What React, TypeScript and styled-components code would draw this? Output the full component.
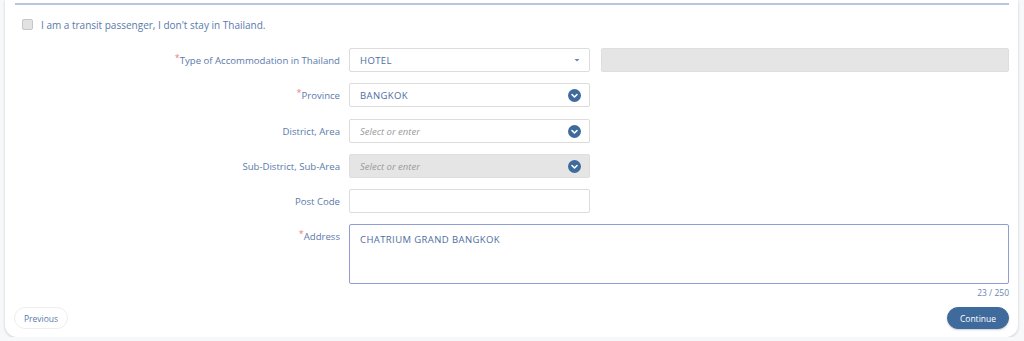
import { FC } from "react";
import styled, { createGlobalStyle } from "styled-components";

const GlobalStyle = createGlobalStyle`
  body {
    margin: 0;
    background: #f7f8fa;
    font-family: "Open Sans", "Liberation Sans", sans-serif;
  }
`;

const Card = styled.div`
  margin: 0 6px 0 5px;
  height: 337px;
  box-sizing: border-box;
  background: #fff;
  border-radius: 0 0 12px 12px;
  box-shadow: 0 1px 3px rgba(0, 0, 0, 0.18);
  padding: 0 9px 0 10px;
  display: flex;
  flex-direction: column;
`;

const Section = styled.div`
  margin-top: 3px;
  border-top: 2px solid #b8c6de;
  display: flex;
  flex-direction: column;
`;

const CheckRow = styled.label`
  display: flex;
  align-items: center;
  gap: 8px;
  padding: 14px 0 0 7px;
  height: 11px;
  font-size: 10px;
  color: #5a7aab;
`;

const Box = styled.span`
  width: 9px;
  height: 9px;
  border: 1px solid #c6c6c6;
  border-radius: 2px;
  background: #e2e2e2;
`;

const Form = styled.div`
  display: grid;
  grid-template-columns: 325px 241px 1fr;
  column-gap: 9px;
  row-gap: 11px;
  margin-top: 18px;
`;

const Label = styled.div<{ $shift?: boolean }>`
  font-size: 9.6px;
  color: #5a7aab;
  text-align: right;
  padding-top: ${({ $shift }) => ($shift ? "7px" : "6px")};
  white-space: nowrap;
`;

const Star = styled.span`
  color: #ef7d7d;
  position: relative;
  top: -3px;
  font-size: 9px;
`;

const Field = styled.div<{ $disabled?: boolean; $side?: boolean; $shift?: boolean }>`
  margin-left: ${({ $side }) => ($side ? "2px" : "0")};
  margin-top: ${({ $shift }) => ($shift ? "1px" : "0")};
  height: 24px;
  box-sizing: border-box;
  border: 1px solid ${({ $disabled }) => ($disabled ? "#dedede" : "#dcdcdc")};
  border-radius: 2px;
  background: ${({ $disabled }) => ($disabled ? "#e5e5e5" : "#fff")};
  display: flex;
  align-items: center;
  padding: 0 8px 0 10px;
  font-size: 9.5px;
  color: #4d6da0;
`;

const Value = styled.span<{ $placeholder?: boolean }>`
  flex: 1;
  font-style: ${({ $placeholder }) => ($placeholder ? "italic" : "normal")};
  color: ${({ $placeholder }) => ($placeholder ? "#9a9a9a" : "#4d6da0")};
  letter-spacing: ${({ $placeholder }) => ($placeholder ? "0" : "0.4px")};
`;

const Spacer = styled.div``;

const TextArea = styled.div`
  grid-column: 2 / 4;
  height: 60px;
  box-sizing: border-box;
  border: 1px solid #8e9dd4;
  border-radius: 2px;
  padding: 8px 10px;
  font-size: 9.5px;
  color: #4d6da0;
  letter-spacing: 0.4px;
`;

const Counter = styled.div`
  text-align: right;
  font-size: 8.5px;
  color: #6a86b0;
  margin-top: 3px;
`;

const Footer = styled.div`
  display: flex;
  justify-content: space-between;
  margin: 9px 0 0 -1px;
`;

const Button = styled.button<{ $primary?: boolean }>`
  height: 22px;
  border-radius: 11px;
  font-family: inherit;
  font-size: 8.5px;
  padding: 0 ${({ $primary }) => ($primary ? "12px" : "9px")};
  border: 1px solid ${({ $primary }) => ($primary ? "#3f6a9c" : "#eeeeee")};
  background: ${({ $primary }) => ($primary ? "#3f6a9c" : "#fff")};
  color: ${({ $primary }) => ($primary ? "#fff" : "#5a7aab")};
  box-shadow: ${({ $primary }) => ($primary ? "0 1px 2px rgba(0,0,0,0.2)" : "none")};
`;

const Caret: FC = () => (
  <svg width="8" height="5" viewBox="0 0 8 5">
    <path d="M1.5 1 L4 3.5 L6.5 1 Z" fill="#6c86ad" />
  </svg>
);

const Chevron: FC = () => (
  <svg width="13" height="13" viewBox="0 0 13 13">
    <circle cx="6.5" cy="6.5" r="6.5" fill="#3f6a9c" />
    <path d="M4 5.5 L6.5 8 L9 5.5" fill="none" stroke="#fff" strokeWidth="1.6" strokeLinecap="round" strokeLinejoin="round" />
  </svg>
);

const App: FC = () => (
  <>
    <GlobalStyle />
    <Card>
      <Section>
        <CheckRow>
          <Box />
          I am a transit passenger, I don't stay in Thailand.
        </CheckRow>
        <Form>
          <Label>
            <Star>*</Star>Type of Accommodation in Thailand
          </Label>
          <Field>
            <Value>HOTEL</Value>
            <Caret />
          </Field>
          <Field $disabled $side />

          <Label>
            <Star>*</Star>Province
          </Label>
          <Field>
            <Value>BANGKOK</Value>
            <Chevron />
          </Field>
          <Spacer />

          <Label $shift>District, Area</Label>
          <Field $shift>
            <Value $placeholder>Select or enter</Value>
            <Chevron />
          </Field>
          <Spacer />

          <Label>Sub-District, Sub-Area</Label>
          <Field $disabled>
            <Value $placeholder>Select or enter</Value>
            <Chevron />
          </Field>
          <Spacer />

          <Label>Post Code</Label>
          <Field />
          <Spacer />

          <Label>
            <Star>*</Star>Address
          </Label>
          <TextArea>CHATRIUM GRAND BANGKOK</TextArea>
        </Form>
        <Counter>23 / 250</Counter>
        <Footer>
          <Button>Previous</Button>
          <Button $primary>Continue</Button>
        </Footer>
      </Section>
    </Card>
  </>
);

export default App;
